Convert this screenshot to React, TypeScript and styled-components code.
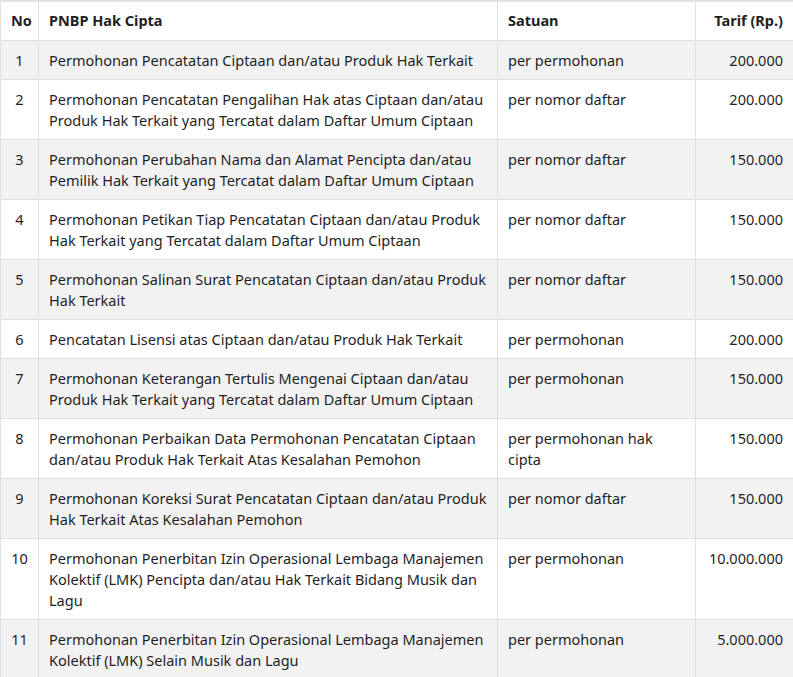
import React from 'react';
import styled, { createGlobalStyle } from 'styled-components';

const GlobalStyle = createGlobalStyle`
  body {
    margin: 0;
    background: #ffffff;
    font-family: "Noto Sans", "Open Sans", sans-serif;
    color: #1f1f1f;
  }
`;

const Table = styled.table`
  width: 793px;
  table-layout: fixed;
  border-collapse: collapse;
  border-top: 2px solid #e3e3e3;
  font-size: 14.5px;
  line-height: 21px;
`;

const Row = styled.tr<{ $striped?: boolean }>`
  background: ${p => (p.$striped ? '#f2f2f2' : '#ffffff')};
`;

const HeadCell = styled.th<{ $align?: string }>`
  text-align: ${p => p.$align || 'left'};
  font-weight: 700;
  padding: 8px 10px 9px;
  border: 1px solid #e0e0e0;
  vertical-align: top;
`;

const Cell = styled.td<{ $align?: string }>`
  text-align: ${p => p.$align || 'left'};
  padding: 9px 10px 8px;
  border: 1px solid #e0e0e0;
  vertical-align: top;
`;

const rows: [string, string, string][] = [
  ['Permohonan Pencatatan Ciptaan dan/atau Produk Hak Terkait', 'per permohonan', '200.000'],
  ['Permohonan Pencatatan Pengalihan Hak atas Ciptaan dan/atau Produk Hak Terkait yang Tercatat dalam Daftar Umum Ciptaan', 'per nomor daftar', '200.000'],
  ['Permohonan Perubahan Nama dan Alamat Pencipta dan/atau Pemilik Hak Terkait yang Tercatat dalam Daftar Umum Ciptaan', 'per nomor daftar', '150.000'],
  ['Permohonan Petikan Tiap Pencatatan Ciptaan dan/atau Produk Hak Terkait yang Tercatat dalam Daftar Umum Ciptaan', 'per nomor daftar', '150.000'],
  ['Permohonan Salinan Surat Pencatatan Ciptaan dan/atau Produk Hak Terkait', 'per nomor daftar', '150.000'],
  ['Pencatatan Lisensi atas Ciptaan dan/atau Produk Hak Terkait', 'per permohonan', '200.000'],
  ['Permohonan Keterangan Tertulis Mengenai Ciptaan dan/atau Produk Hak Terkait yang Tercatat dalam Daftar Umum Ciptaan', 'per permohonan', '150.000'],
  ['Permohonan Perbaikan Data Permohonan Pencatatan Ciptaan dan/atau Produk Hak Terkait Atas Kesalahan Pemohon', 'per permohonan hak cipta', '150.000'],
  ['Permohonan Koreksi Surat Pencatatan Ciptaan dan/atau Produk Hak Terkait Atas Kesalahan Pemohon', 'per nomor daftar', '150.000'],
  ['Permohonan Penerbitan Izin Operasional Lembaga Manajemen Kolektif (LMK) Pencipta dan/atau Hak Terkait Bidang Musik dan Lagu', 'per permohonan', '10.000.000'],
  ['Permohonan Penerbitan Izin Operasional Lembaga Manajemen Kolektif (LMK) Selain Musik dan Lagu', 'per permohonan', '5.000.000'],
];

export default function App() {
  return (
    <>
      <GlobalStyle />
      <Table>
        <colgroup>
          <col style={{ width: 38 }} />
          <col style={{ width: 459 }} />
          <col style={{ width: 198 }} />
          <col style={{ width: 98 }} />
        </colgroup>
        <thead>
          <Row>
            <HeadCell $align="center">No</HeadCell>
            <HeadCell>PNBP Hak Cipta</HeadCell>
            <HeadCell>Satuan</HeadCell>
            <HeadCell $align="right">Tarif (Rp.)</HeadCell>
          </Row>
        </thead>
        <tbody>
          {rows.map(([name, unit, tarif], i) => (
            <Row key={i} $striped={i % 2 === 0}>
              <Cell $align="center">{i + 1}</Cell>
              <Cell>{name}</Cell>
              <Cell>{unit}</Cell>
              <Cell $align="right">{tarif}</Cell>
            </Row>
          ))}
        </tbody>
      </Table>
    </>
  );
}
